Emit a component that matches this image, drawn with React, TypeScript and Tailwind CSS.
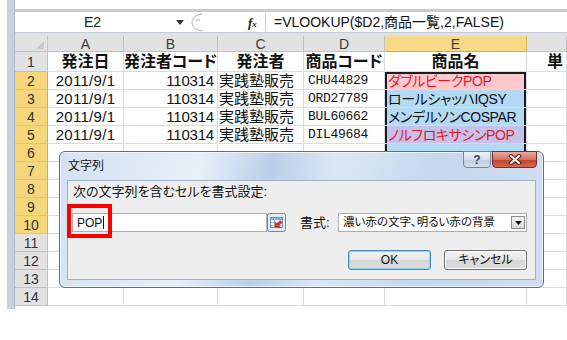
import React from "react";

const SANS = "font-['Liberation_Sans','Noto_Sans_CJK_JP',sans-serif]";
const JP = "font-['Liberation_Sans','Noto_Sans_CJK_JP',sans-serif] [font-feature-settings:'palt']";

type Row = { c: string; d: string; e: string };
const data: Record<number, Row> = {
  2: { c: "実践塾販売", d: "CHU44829", e: "ダブルビークPOP" },
  3: { c: "実践塾販売", d: "ORD27789", e: "ロールシャッハIQSY" },
  4: { c: "実践塾販売", d: "BUL60662", e: "メンデルソンCOSPAR" },
  5: { c: "実践塾販売", d: "DIL49684", e: "ノルフロキサシンPOP" },
};

const eBg: Record<number, string> = {
  2: "bg-[#ffc7ce]",
  3: "bg-[#b3d9f3]",
  4: "bg-[#b3d9f3]",
  5: "bg-[#c7c0ea]",
  6: "bg-[#b3d9f3]",
  7: "bg-[#b3d9f3]",
  8: "bg-[#b3d9f3]",
  9: "bg-[#b3d9f3]",
  10: "bg-[#b3d9f3]",
};

const GRID = "border-r border-b border-[#d6dbe4]";

function ColHead({ label, active }: { label: string; active?: boolean }) {
  return (
    <div
      className={
        "flex items-center justify-center text-[14px] leading-none text-[#3c3c3c] border-r border-b " +
        (active ? "bg-[#f8da86] border-r-[#d9b25a] border-b-[#eca23a]" : "bg-[#e2e2e2] border-[#bcc1c8]")
      }
    >
      {label}
    </div>
  );
}

function RowHead({ n }: { n: number }) {
  const active = n >= 2 && n <= 10;
  return (
    <div
      className={
        "flex items-center justify-center text-[14px] leading-none text-[#333] border-r border-b " +
        (active ? "bg-[#f6d67a] border-r-[#e2a847] border-b-[#e9c46a]" : "bg-[#e2e2e2] border-[#bcc1c8]")
      }
    >
      {n}
    </div>
  );
}

function RangeIcon() {
  return (
    <svg width="19" height="19" viewBox="0 0 19 19">
      <rect x="0.5" y="0.5" width="18" height="18" rx="2" fill="#e6ecf4" stroke="#7b8593" />
      <rect x="3.5" y="4.5" width="12" height="10" fill="#ffffff" stroke="#6f92c2" />
      <rect x="4" y="5" width="11" height="2" fill="#86acdc" />
      <line x1="4" y1="9.5" x2="15" y2="9.5" stroke="#a7c0e2" />
      <line x1="4" y1="12.5" x2="15" y2="12.5" stroke="#a7c0e2" />
      <line x1="7.5" y1="5" x2="7.5" y2="14" stroke="#a7c0e2" />
      <path d="M8 14 L8 9 L9.8 10.8 L13.2 7.4 L15.2 9.4 L11.8 12.8 L13.6 14.6 Z" fill="#e2332b" stroke="#a01a14" strokeWidth="0.5" />
    </svg>
  );
}

export default function App() {
  const rows = [2, 3, 4, 5, 6, 7, 8, 9, 10, 11, 12, 13, 14];
  return (
    <div className={"relative w-[567px] h-[340px] bg-white flex overflow-hidden " + SANS}>
      <div className="w-[7px]" />
      <div className="w-[8px] h-[309px] bg-[#c9d1dc] border-r border-[#aeb8c6]" />
      <div className="flex-1 flex flex-col">
        <div className="h-[9px] bg-white" />
        <div className="h-[3px] bg-[#c6ccd5]" />
        {/* formula bar */}
        <div className="h-[21px] flex items-center bg-white border-b border-[#c5cbd3]">
          <div className="w-[155px] text-center text-[14px] leading-none text-[#222]">E2</div>
          <div className="w-[20px] flex items-center justify-center">
            <svg width="8" height="5" viewBox="0 0 8 5"><path d="M0 0 L8 0 L4 5 Z" fill="#333" /></svg>
          </div>
          <div className="w-[14px] h-full flex items-center">
            <svg width="14" height="21" viewBox="0 0 14 21">
              <path d="M12 2 C4 3 2 8 2 10.5 C2 13 4 18 12 19" fill="none" stroke="#a9b1bb" />
              <circle cx="7" cy="8" r="0.8" fill="#9aa3ad" />
              <circle cx="9" cy="8" r="0.8" fill="#9aa3ad" />
            </svg>
          </div>
          <div className="w-[44px]" />
          <div className="w-[16px] text-[13px] leading-none italic font-bold font-['Liberation_Serif',serif] text-[#222]">
            f<span className="text-[9px]">x</span>
          </div>
          <div className="w-px h-[17px] bg-[#c5cbd3] ml-[1px]" />
          <div className={"pl-[8px] text-[14px] leading-none text-[#111] whitespace-nowrap " + JP}>
            =VLOOKUP($D2,商品一覧,2,FALSE)
          </div>
        </div>
        <div className="h-[3px] bg-[#dfe3e8]" />
        {/* sheet */}
        <div className="grid grid-cols-[33px_76px_94px_86px_81px_142px_40px] grid-rows-[16px_20px_repeat(13,18px)]">
          <div className="bg-[#e2e2e2] border-r border-b border-[#bcc1c8] relative">
            <svg className="absolute right-[3px] bottom-[2px]" width="8" height="8" viewBox="0 0 8 8">
              <path d="M8 0 L8 8 L0 8 Z" fill="#c8c8c8" />
            </svg>
          </div>
          <ColHead label="A" />
          <ColHead label="B" />
          <ColHead label="C" />
          <ColHead label="D" />
          <ColHead label="E" active />
          <ColHead label="" />

          <RowHead n={1} />
          <div className={GRID + " flex items-center justify-center text-[16px] font-bold leading-none text-[#111] " + JP}>発注日</div>
          <div className={GRID + " flex items-center justify-center text-[16px] font-bold leading-none text-[#111] whitespace-nowrap " + JP}>発注者コード</div>
          <div className={GRID + " flex items-center justify-center text-[16px] font-bold leading-none text-[#111] " + JP}>発注者</div>
          <div className={GRID + " flex items-center justify-center text-[16px] font-bold leading-none text-[#111] whitespace-nowrap " + JP}>商品コード</div>
          <div className={GRID + " flex items-center justify-center text-[16px] font-bold leading-none text-[#111] " + JP}>商品名</div>
          <div className={GRID + " flex items-center pl-[20px] text-[16px] font-bold leading-none text-[#111] whitespace-nowrap overflow-hidden " + JP}>単</div>

          {rows.map((r) => {
            const d = data[r];
            const red = r === 2 || r === 5;
            const sel = r >= 2 && r <= 10;
            const shadow =
              r === 2
                ? "shadow-[inset_2px_0_0_#1c1c1c,inset_-2px_0_0_#1c1c1c,inset_0_2px_0_#1c1c1c]"
                : sel
                ? "shadow-[inset_2px_0_0_#1c1c1c,inset_-2px_0_0_#1c1c1c]"
                : "";
            return (
              <React.Fragment key={r}>
                <RowHead n={r} />
                <div className={GRID + " flex items-center justify-center text-[15px] leading-none text-[#111] tracking-[0.3px]"}>
                  {d ? "2011/9/1" : ""}
                </div>
                <div className={GRID + " flex items-center justify-end pr-[3px] text-[15px] leading-none text-[#111] tracking-[-0.2px]"}>
                  {d ? "110314" : ""}
                </div>
                <div className={GRID + " flex items-center pl-[1px] text-[15px] leading-none text-[#111] whitespace-nowrap overflow-hidden " + JP}>
                  {d ? d.c : ""}
                </div>
                <div className={GRID + " flex items-center pl-[4px] text-[13px] leading-none text-[#111] tracking-[-0.3px] font-['Liberation_Mono',monospace]"}>
                  {d ? d.d : ""}
                </div>
                <div
                  className={
                    GRID +
                    " flex items-center pl-[3px] text-[14px] tracking-[-0.4px] leading-none whitespace-nowrap overflow-hidden " +
                    JP +
                    " " +
                    (eBg[r] ?? "") +
                    " " +
                    shadow +
                    " " +
                    (red ? "text-[#d8202c]" : "text-[#111]")
                  }
                >
                  {d ? d.e : ""}
                </div>
                <div className={GRID} />
              </React.Fragment>
            );
          })}
        </div>
      </div>

      {/* dialog */}
      <div className="absolute left-[59px] top-[151px] w-[485px] h-[137px] rounded-[6px] border border-[#5d6d82] bg-[linear-gradient(100deg,#d3e1f1_0%,#e8f0f9_28%,#b9cfe8_42%,#dbe7f4_55%,#c6d8ee_75%,#d0def0_100%)] flex flex-col px-[7px] pb-[7px] shadow-[inset_0_0_0_1px_#eef4fb]">
        <div className={"h-[28px] flex items-center pl-[1px] text-[12px] leading-none text-[#111] " + JP}>文字列</div>
        <div className={"relative flex-1 flex flex-col bg-[#eeeeee] border border-[#9fb0c5] " + JP}>
          <div className="h-[17px] mt-[2px] pl-[5px] flex items-center text-[13px] leading-none text-[#111]">
            次の文字列を含むセルを書式設定:
          </div>
          <div className="mt-[13px] h-[19px] flex items-center">
            <div className="ml-[4px] w-[195px] h-[19px] bg-white border border-[#abadb3] flex items-center pl-[4px] text-[12px] leading-none text-[#111]">
              POP<span className="w-px h-[13px] bg-[#111] ml-[1px]" />
            </div>
            <RangeIcon />
            <div className="ml-[14px] w-[38px] text-[13px] leading-none text-[#111]">書式:</div>
            <div className="w-[189px] h-[19px] bg-white border border-[#abadb3] flex items-center justify-between pl-[4px] pr-[1px]">
              <span className="text-[11.5px] leading-none text-[#111] whitespace-nowrap">濃い赤の文字、明るい赤の背景</span>
              <span className="w-[14px] h-[13px] border border-[#8c8c8c] bg-[linear-gradient(#f4f4f4,#d8d8d8)] flex items-center justify-center">
                <svg width="7" height="4" viewBox="0 0 7 4"><path d="M0 0 L7 0 L3.5 4 Z" fill="#111" /></svg>
              </span>
            </div>
          </div>
          <div className="mt-[18px] h-[20px] flex justify-end gap-[13px] pr-[8px]">
            <div className="w-[83px] h-[20px] rounded-[3px] border border-[#3c8ec9] shadow-[inset_0_0_0_1px_#8fd3f5] bg-[linear-gradient(#f2f2f2,#e6e6e6_50%,#d6d6d6_51%,#dcdcdc)] flex items-center justify-center text-[12px] leading-none text-[#111]">
              OK
            </div>
            <div className="w-[83px] h-[20px] rounded-[3px] border border-[#707070] shadow-[inset_0_0_0_1px_#fbfbfb] bg-[linear-gradient(#f2f2f2,#e6e6e6_50%,#d6d6d6_51%,#dcdcdc)] flex items-center justify-center text-[12px] leading-none text-[#111]">
              キャンセル
            </div>
          </div>
          {/* red highlight */}
          <div className="absolute left-[-1px] top-[23px] w-[45px] h-[34px] border-[4px] border-[#ff0000]" />
        </div>
        {/* caption buttons */}
        <div className="absolute top-[-1px] right-[6px] flex gap-[1px]">
          <div className="w-[28px] h-[17px] rounded-b-[4px] border border-[#74869e] bg-[linear-gradient(#eef3f9,#d3deeb_50%,#bfcde0_51%,#d2deec)] flex items-center justify-center text-[12px] font-bold leading-none text-[#3a4656]">
            ?
          </div>
          <div className="w-[45px] h-[17px] rounded-b-[4px] border border-[#7b2d25] bg-[linear-gradient(#e9aa9c,#d7705f_50%,#c2402f_51%,#d06a55)] flex items-center justify-center">
            <svg width="14" height="11" viewBox="0 0 14 11">
              <path d="M3 2 L11 9 M11 2 L3 9" stroke="#5a1a14" strokeWidth="4" strokeLinecap="square" />
              <path d="M3 2 L11 9 M11 2 L3 9" stroke="#ffffff" strokeWidth="2" strokeLinecap="square" />
            </svg>
          </div>
        </div>
      </div>
    </div>
  );
}
